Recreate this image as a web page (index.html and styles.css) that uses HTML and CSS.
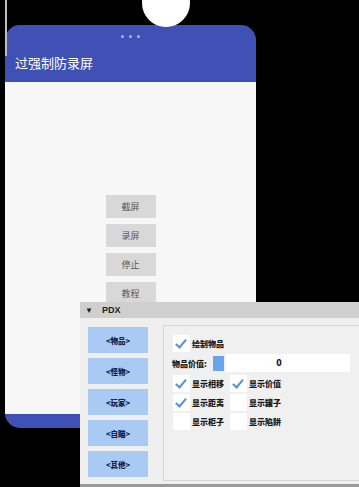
FILE: index.html
```html
<!DOCTYPE html>
<html lang="zh">
<head>
  <meta charset="UTF-8">
  <title>过强制防录屏</title>
  <meta name="viewport" content="width=device-width, initial-scale=1.0">
  <link rel="stylesheet" href="styles.css">
</head>
<body>
  <div class="screen">
    <div class="notch"></div>
    <div class="edge"></div>

    <div class="phone">
      <header class="appbar">
        <div class="dots"><span></span><span></span><span></span></div>
        <h1>过强制防录屏</h1>
      </header>
      <main class="appbody">
        <div class="actions">
          <button>截屏</button>
          <button>录屏</button>
          <button>停止</button>
          <button>教程</button>
        </div>
      </main>
    </div>

    <div class="panel">
      <div class="panel-head"><span class="arrow">▼</span><span>PDX</span></div>
      <div class="panel-main">
        <div class="tabs">
          <button>&lt;物品&gt;</button>
          <button>&lt;怪物&gt;</button>
          <button>&lt;玩家&gt;</button>
          <button>&lt;自瞄&gt;</button>
          <button>&lt;其他&gt;</button>
        </div>
        <div class="content">
          <label class="check on"><span class="box"></span>绘制物品</label>
          <div class="value-row">
            <span>物品价值:</span>
            <span class="thumb"></span>
            <span class="field">0</span>
          </div>
          <div class="opts">
            <label class="check on"><span class="box"></span>显示相移</label>
            <label class="check on"><span class="box"></span>显示价值</label>
            <label class="check on"><span class="box"></span>显示距离</label>
            <label class="check"><span class="box"></span>显示罐子</label>
            <label class="check"><span class="box"></span>显示柜子</label>
            <label class="check"><span class="box"></span>显示陷阱</label>
          </div>
        </div>
      </div>
    </div>
  </div>
</body>
</html>
```

FILE: styles.css
```css
body {
  margin: 0;
  background: #000;
  font-family: "Noto Sans CJK SC", "Noto Sans", sans-serif;
}
.screen {
  position: relative;
  width: 359px;
  height: 487px;
  overflow: hidden;
  background: #000;
}
.notch {
  position: absolute;
  left: 142px;
  top: -21px;
  width: 48px;
  height: 48px;
  border-radius: 50%;
  background: #fff;
  z-index: 2;
}
.edge {
  position: absolute;
  left: 5px;
  top: 0;
  width: 2px;
  height: 56px;
  background: #bdbdbd;
  z-index: 2;
}
.phone {
  margin: 25px 0 0 5px;
  width: 251px;
  height: 403px;
  border-radius: 15px;
  background: #3f51b5;
  overflow: hidden;
  display: flex;
  flex-direction: column;
  padding-bottom: 14px;
  box-sizing: border-box;
}
.appbar {
  height: 57px;
  flex: none;
  position: relative;
}
.dots {
  display: flex;
  justify-content: center;
  gap: 5px;
  padding-top: 10px;
}
.dots span {
  width: 3px;
  height: 3px;
  border-radius: 50%;
  background: #9fb2ee;
}
.appbar h1 {
  margin: 0;
  padding: 17px 0 0 10px;
  font-size: 13px;
  font-weight: normal;
  color: #fff;
  line-height: 16px;
}
.appbody {
  flex: 1;
  background: #f8f7f8;
}
.actions {
  display: flex;
  flex-direction: column;
  align-items: center;
  gap: 6px;
  margin-top: 113px;
}
.actions button {
  width: 50px;
  height: 23px;
  border: none;
  background: #d8d8d8;
  color: #555;
  font-family: inherit;
  font-size: 9px;
  padding: 0;
}

.panel {
  position: absolute;
  left: 80px;
  top: 302px;
  width: 290px;
  height: 185px;
  background: #efefef;
  border-bottom: 3px solid #9a9a9a;
  box-sizing: border-box;
}
.panel-head {
  height: 16px;
  background: #cfcfcf;
  display: flex;
  align-items: center;
  gap: 9px;
  padding-left: 5px;
  font-family: "Liberation Sans", Arial, sans-serif;
  font-weight: bold;
  font-size: 9px;
  color: #222;
}
.panel-head .arrow {
  font-size: 8px;
}
.panel-main {
  display: flex;
  gap: 15px;
  padding: 7px 0 0 8px;
}
.tabs {
  width: 60px;
  display: flex;
  flex-direction: column;
  gap: 5px;
  margin-top: 2px;
}
.tabs button {
  height: 26px;
  border: none;
  padding: 0;
  background: #a9cbf3;
  color: #14224a;
  font-family: inherit;
  font-weight: 900;
  font-size: 7.5px;
}
.content {
  flex: 1;
  height: 156px;
  border: 1px solid #d6d6d6;
  background: #f0f0f0;
  padding: 9px 0 0 9px;
  box-sizing: border-box;
  font-size: 8px;
  font-weight: 900;
  color: #1a1a1a;
}
.check {
  display: flex;
  align-items: center;
  gap: 2px;
  height: 17px;
}
.box {
  position: relative;
  width: 17px;
  height: 17px;
  background: #fff;
  flex: none;
}
.check.on .box::after {
  content: "";
  position: absolute;
  left: 5px;
  top: 2px;
  width: 4px;
  height: 9px;
  border: solid #5790d4;
  border-width: 0 2.5px 2.5px 0;
  transform: rotate(40deg);
}
.value-row {
  display: flex;
  align-items: center;
  height: 18px;
  margin: 2px 0 3px -1px;
}
.value-row span:first-child {
  width: 41px;
}
.thumb {
  width: 11px;
  height: 15px;
  background: #6aa5ea;
}
.field {
  width: 124px;
  height: 18px;
  margin-left: 2px;
  padding-right: 18px;
  box-sizing: border-box;
  background: #fff;
  text-align: center;
  line-height: 18px;
  font-size: 9px;
}
.opts {
  display: grid;
  grid-template-columns: 57px 60px;
  row-gap: 2px;
}
```
